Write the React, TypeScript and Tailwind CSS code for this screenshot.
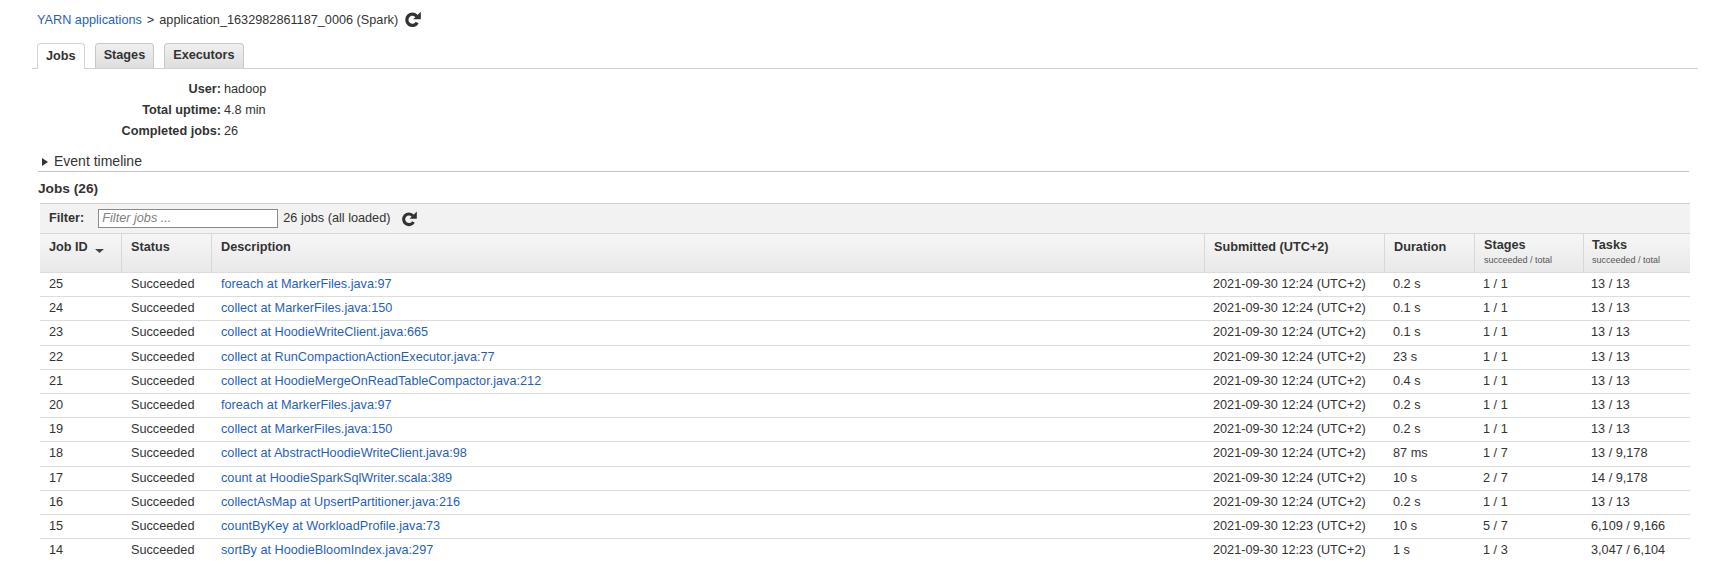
import React from "react";

type Job = {
  id: number;
  desc: string;
  submitted: string;
  duration: string;
  stages: string;
  tasks: string;
};

const jobs: Job[] = [
  { id: 25, desc: "foreach at MarkerFiles.java:97", submitted: "2021-09-30 12:24 (UTC+2)", duration: "0.2 s", stages: "1 / 1", tasks: "13 / 13" },
  { id: 24, desc: "collect at MarkerFiles.java:150", submitted: "2021-09-30 12:24 (UTC+2)", duration: "0.1 s", stages: "1 / 1", tasks: "13 / 13" },
  { id: 23, desc: "collect at HoodieWriteClient.java:665", submitted: "2021-09-30 12:24 (UTC+2)", duration: "0.1 s", stages: "1 / 1", tasks: "13 / 13" },
  { id: 22, desc: "collect at RunCompactionActionExecutor.java:77", submitted: "2021-09-30 12:24 (UTC+2)", duration: "23 s", stages: "1 / 1", tasks: "13 / 13" },
  { id: 21, desc: "collect at HoodieMergeOnReadTableCompactor.java:212", submitted: "2021-09-30 12:24 (UTC+2)", duration: "0.4 s", stages: "1 / 1", tasks: "13 / 13" },
  { id: 20, desc: "foreach at MarkerFiles.java:97", submitted: "2021-09-30 12:24 (UTC+2)", duration: "0.2 s", stages: "1 / 1", tasks: "13 / 13" },
  { id: 19, desc: "collect at MarkerFiles.java:150", submitted: "2021-09-30 12:24 (UTC+2)", duration: "0.2 s", stages: "1 / 1", tasks: "13 / 13" },
  { id: 18, desc: "collect at AbstractHoodieWriteClient.java:98", submitted: "2021-09-30 12:24 (UTC+2)", duration: "87 ms", stages: "1 / 7", tasks: "13 / 9,178" },
  { id: 17, desc: "count at HoodieSparkSqlWriter.scala:389", submitted: "2021-09-30 12:24 (UTC+2)", duration: "10 s", stages: "2 / 7", tasks: "14 / 9,178" },
  { id: 16, desc: "collectAsMap at UpsertPartitioner.java:216", submitted: "2021-09-30 12:24 (UTC+2)", duration: "0.2 s", stages: "1 / 1", tasks: "13 / 13" },
  { id: 15, desc: "countByKey at WorkloadProfile.java:73", submitted: "2021-09-30 12:23 (UTC+2)", duration: "10 s", stages: "5 / 7", tasks: "6,109 / 9,166" },
  { id: 14, desc: "sortBy at HoodieBloomIndex.java:297", submitted: "2021-09-30 12:23 (UTC+2)", duration: "1 s", stages: "1 / 3", tasks: "3,047 / 6,104" },
];

const cols = "grid grid-cols-[81px_90px_993px_180px_90px_109px_107px]";

function RefreshIcon({ className }: { className?: string }) {
  return (
    <svg viewBox="0 0 16 16" className={className} aria-hidden="true">
      <path
        d="M12 4.9 A5.3 5.3 0 1 0 12.5 11"
        fill="none"
        stroke="#333"
        strokeWidth="3.1"
      />
      <polygon points="15.8,0.6 15.8,7.8 8.6,7.8" fill="#333" />
    </svg>
  );
}

function Tab({ label, active }: { label: string; active?: boolean }) {
  return (
    <div
      className={
        active
          ? "-mb-px flex h-[26px] items-center rounded-t-[4px] border border-b-0 border-[#d4d4d4] bg-white px-[8px] font-bold"
          : "flex h-[25px] items-center rounded-t-[4px] border border-b-0 border-[#c8c8c8] bg-gradient-to-b from-[#f0f0f0] to-[#dedede] px-[8px] font-bold"
      }
    >
      {label}
    </div>
  );
}

function InfoRow({ label, value }: { label: string; value: string }) {
  return (
    <div className="flex h-[21px] items-center">
      <span className="w-[181px] text-right font-bold">{label}</span>
      <span className="pl-[3px]">{value}</span>
    </div>
  );
}

export default function App() {
  return (
    <div className="min-h-[581px] bg-white font-['Liberation_Sans',Arial,sans-serif] text-[12.7px] text-[#333]">
      <div className="mt-[12px] flex h-[18px] items-center pl-[37px]">
        <a className="text-[#1f5fbf]">YARN applications</a>
        <span className="px-[5px]">&gt;</span>
        <span>application_1632982861187_0006 (Spark)</span>
        <RefreshIcon className="ml-[6px] -mt-[4px] h-[17px] w-[17px]" />
      </div>

      <div className="ml-[32px] mt-[13px] flex h-[26px] w-[1666px] items-end gap-[10px] border-b border-[#cfcfcf] pl-[5px]">
        <Tab label="Jobs" active />
        <Tab label="Stages" />
        <Tab label="Executors" />
      </div>

      <div className="ml-[40px] mt-[10px]">
        <InfoRow label="User:" value="hadoop" />
        <InfoRow label="Total uptime:" value="4.8 min" />
        <InfoRow label="Completed jobs:" value="26" />
      </div>

      <div className="ml-[38px] mt-[11px] flex h-[19px] w-[1651px] items-center border-b border-[#c4c4c4] pb-px text-[14px]">
        <svg viewBox="0 0 6 8" className="ml-[4px] h-[8px] w-[6px]" aria-hidden="true">
          <polygon points="0,0 6,4 0,8" fill="#333" />
        </svg>
        <span className="ml-[6px]">Event timeline</span>
      </div>

      <div className="ml-[38px] mt-[8px] flex h-[18px] items-center text-[13.7px] font-bold">
        Jobs (26)
      </div>

      <div className="ml-[40px] mt-[5px] w-[1650px]">
        <div className="flex h-[30px] items-center border-t border-[#d0d0d0] bg-[#f2f2f2] pl-[9px]">
          <span className="font-bold">Filter:</span>
          <div className="ml-[14px] flex h-[19px] w-[180px] items-center border border-[#8a8a8a] bg-white pl-[3px] italic text-[#808080]">
            Filter jobs ...
          </div>
          <span className="ml-[5px]">26 jobs (all loaded)</span>
          <RefreshIcon className="ml-[11px] h-[16px] w-[16px]" />
        </div>

        <div className={`${cols} h-[39px] border-t border-[#d6d6d6] bg-gradient-to-b from-[#f6f6f6] to-[#e9e9e9] font-bold`}>
          <div className="flex items-start pl-[9px] pt-[4px]">
            <span>Job ID</span>
            <svg viewBox="0 0 9 4" className="ml-[7px] mt-[11px] h-[4px] w-[9px]" aria-hidden="true">
              <polygon points="0,0 9,0 4.5,4" fill="#444" />
            </svg>
          </div>
          <div className="border-l border-[#d8d8d8] pl-[9px] pt-[4px]">Status</div>
          <div className="border-l border-[#d8d8d8] pl-[9px] pt-[4px]">Description</div>
          <div className="border-l border-[#d8d8d8] pl-[9px] pt-[4px]">Submitted (UTC+2)</div>
          <div className="border-l border-[#d8d8d8] pl-[9px] pt-[4px]">Duration</div>
          <div className="border-l border-[#d8d8d8] pl-[9px] pt-[4px] leading-[15px]">
            <div>Stages</div>
            <div className="text-[9px] font-normal text-[#555]">succeeded / total</div>
          </div>
          <div className="border-l border-[#d8d8d8] pl-[8px] pt-[4px] leading-[15px]">
            <div>Tasks</div>
            <div className="text-[9px] font-normal text-[#555]">succeeded / total</div>
          </div>
        </div>

        {jobs.map((job) => (
          <div
            key={job.id}
            className={`${cols} h-[24.2px] items-center border-t border-[#dcdcdc]`}
          >
            <div className="pl-[9px]">{job.id}</div>
            <div className="pl-[10px]">Succeeded</div>
            <div className="pl-[10px]">
              <a className="text-[#1f5fbf]">{job.desc}</a>
            </div>
            <div className="pl-[9px]">{job.submitted}</div>
            <div className="pl-[9px]">{job.duration}</div>
            <div className="pl-[9px]">{job.stages}</div>
            <div className="pl-[8px]">{job.tasks}</div>
          </div>
        ))}
      </div>
    </div>
  );
}
